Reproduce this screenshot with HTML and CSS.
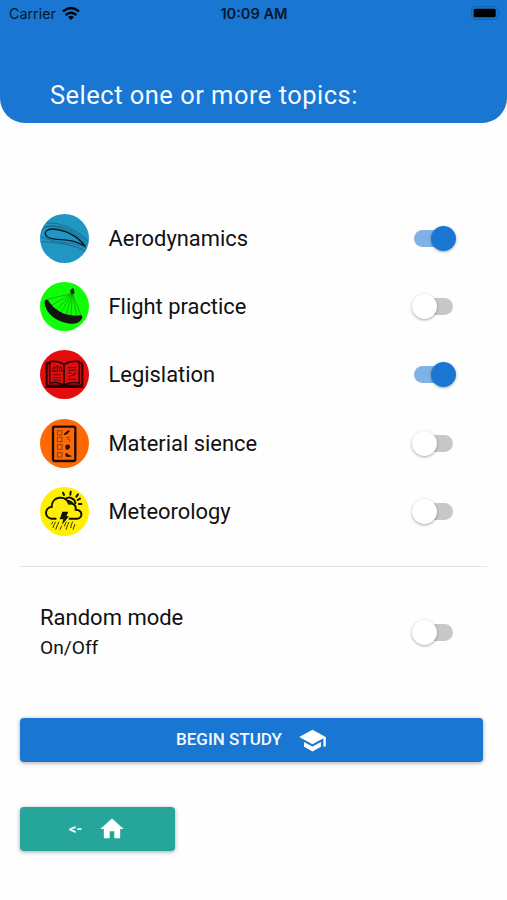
FILE: index.html
```html
<!DOCTYPE html>
<html lang="en">
  <head>
    <meta charset="UTF-8">
    <title>Select topics</title>
    <link rel="stylesheet" href="styles.css">
  </head>
  <body>
    <header class="header">
      <div class="status-bar">
        <div class="carrier">
          <span>Carrier</span>
          <svg class="wifi" viewBox="0 0 54 42">
            <path d="M27 42l-9-9q9-8 18 0z"/>
            <path d="M11 27q16-14 32 0M3 16q24-20 48 0" fill="none" stroke="#000" stroke-width="7"/>
          </svg>
        </div>
        <span class="clock">10:09 AM</span>
        <svg class="battery" viewBox="0 0 90 42">
          <rect x="2" y="2" width="78" height="38" rx="11" fill="none" stroke="#1360ab" stroke-width="3"/>
          <rect x="8" y="8" width="66" height="26" rx="5"/>
          <path d="M84 15q6 6 0 12z" fill="#1360ab"/>
        </svg>
      </div>
      <h1 class="title">Select one or more topics:</h1>
    </header>

    <main class="content">
      <ul class="topics">
        <li class="topic">
          <svg class="topic-icon" viewBox="0 0 147 147">
            <circle cx="73.5" cy="73.5" r="73.5" fill="#2196c3"/>
            <g fill="none" stroke="#15536c" stroke-width="1.8">
              <path d="M20 27q62-4 122 50"/>
              <path d="M12 38q64-15 133 46"/>
              <path d="M5 53q5-18 32-16 53 4 106 54"/>
              <path d="M2 68q38 16 70 18 40 2 68 17"/>
              <path d="M4 83q30 0 58 6 43 5 74 22"/>
            </g>
            <path d="M137 97C110 65 77 47 37 45c-17 0-24 9-20 18 4 10 20 13 45 14 36 2 50 7 75 20z" fill="none" stroke="#061a24" stroke-width="4"/>
          </svg>
          <span class="topic-name">Aerodynamics</span>
          <span class="switch on"></span>
        </li>
        <li class="topic">
          <svg class="topic-icon" viewBox="0 0 147 147">
            <circle cx="73.5" cy="73.5" r="73.5" fill="#10fc08"/>
            <path d="M97 34L23 52M97 34L31 72M97 34L47 86M97 34L61 94M97 34L78 99M97 34L93 102M97 34l13 67M97 34l26 66" stroke="#087908" stroke-width="1.5" fill="none"/>
            <path d="M16 54q5-4 8 1c22 35 56 50 99 45q7 1 2 11-9 16-34 14c-31-2-65-22-74-49q-6-17-1-22z" fill="#151515"/>
            <path d="M92 23l8-6 2 7 2 10-8 3-5-6z" fill="#092108"/>
          </svg>
          <span class="topic-name">Flight practice</span>
          <span class="switch"></span>
        </li>
        <li class="topic">
          <svg class="topic-icon" viewBox="0 0 147 147">
            <circle cx="73.5" cy="73.5" r="73.5" fill="#e40c0d"/>
            <path d="M29 40h-9v71h107V40h-9" fill="none" stroke="#2b0505" stroke-width="6"/>
            <path d="M72 107Q58 94 29 99V35q28-4 43 9 18-13 46-9v64q-31-5-46 8zM72 44v62" fill="none" stroke="#250303" stroke-width="5"/>
            <path d="M20 106h47l6 4 7-4h47" fill="none" stroke="#250303" stroke-width="5"/>
            <g fill="none" stroke="#650808" stroke-width="3">
              <path d="M52 46v22M39 53q13-7 25-1M41 52l-5 12h12zM62 51l-5 12h12z"/>
              <path d="M38 74h25M38 83h25M38 91h25M84 53h24M84 61h24M84 69h10M84 88h24"/>
            </g>
            <path d="M82 83q7-8 15-9l11-7-6 10q-12-1-20 6z" fill="#320404"/>
          </svg>
          <span class="topic-name">Legislation</span>
          <span class="switch on"></span>
        </li>
        <li class="topic">
          <svg class="topic-icon" viewBox="0 0 147 147">
            <circle cx="73.5" cy="73.5" r="73.5" fill="#ff6905"/>
            <rect x="39" y="23" width="67" height="103" rx="5" fill="none" stroke="#1c0c03" stroke-width="7"/>
            <g fill="none" stroke="#92400c" stroke-width="3">
              <rect x="52" y="35" width="14" height="13"/>
              <rect x="52" y="55" width="14" height="13"/>
              <rect x="52" y="77" width="14" height="14"/>
              <rect x="52" y="101" width="14" height="13"/>
              <path d="M78 55h12M81 61h8v7"/>
            </g>
            <g fill="#250f03">
              <path d="M72 49l1-6 13-10 4 2-8 10z"/>
              <path d="M76 80q6-6 13-1 4 6-2 11l-7 3-3-4z"/>
              <path d="M75 106l6-4 4 5 9 3v3l-15 1z"/>
            </g>
          </svg>
          <span class="topic-name">Material sience</span>
          <span class="switch"></span>
        </li>
        <li class="topic">
          <svg class="topic-icon" viewBox="0 0 147 147">
            <circle cx="73.5" cy="73.5" r="73.5" fill="#fff000"/>
            <g fill="none" stroke="#111100" stroke-width="6" stroke-linecap="round">
              <path d="M47 95H35c-24-3-21-34 0-35 0-32 41-38 52-10 14-3 22 6 20 18 23 1 21 25 5 27H89"/>
              <path d="M76 36c13-10 30 0 30 13M86 42q7 1 12 8"/>
              <path d="M69 17l3 7M92 14l-1 9M114 22l-5 7M120 35l-7 4M117 51h7"/>
            </g>
            <path d="M67 74h18l-6 14h8l-21 25 4-16H59z" fill="#111100"/>
            <path d="M39 104l-5 8M47 104l-5 9-3 10M57 104l-6 13-4 11M65 116l-5 12M79 104l-6 14M87 105l-5 11-4 12M98 104l-6 15M105 111l-6 17M94 119l-2 4" fill="none" stroke="#37330a" stroke-width="3"/>
          </svg>
          <span class="topic-name">Meteorology</span>
          <span class="switch"></span>
        </li>
      </ul>

      <section class="random">
        <div>
          <h2 class="random-title">Random mode</h2>
          <p class="random-state">On/Off</p>
        </div>
        <span class="switch"></span>
      </section>

      <button class="btn btn-study">
        <span class="study">BEGIN STUDY</span>
        <svg class="cap" viewBox="0 0 24 24"><path d="M5 13.18v4L12 21l7-3.82v-4L12 17l-7-3.82zM12 3L1 9l11 6 9-4.91V17h2V9L12 3z"/></svg>
      </button>
      <button class="btn btn-home">
        <span class="back">&lt;-</span>
        <svg class="house" viewBox="0 0 24 24"><path d="M10 20v-6h4v6h5v-8h3L12 3 2 12h3v8z"/></svg>
      </button>
    </main>
  </body>
</html>
```
FILE: styles.css
```css
* {
  box-sizing: border-box;
}

body {
  margin: 0;
  height: 900px;
  background-color: #fefefe;
  color: #111;
  font-family: Roboto, sans-serif;
}

h1, h2, p, ul {
  margin: 0;
  padding: 0;
  font-weight: 400;
}

svg {
  display: block;
}

.header {
  height: 123px;
  background-color: #1976d2;
  border-radius: 0 0 25px 25px;
}

.status-bar {
  display: grid;
  grid-template-columns: 1fr auto 1fr;
  align-items: center;
  height: 27px;
  padding: 0 6px 0 9px;
  font-family: Inter, sans-serif;
  font-size: 14.3px;
  color: #06182b;
}

.carrier {
  display: flex;
  align-items: center;
  gap: 6px;
}

.wifi {
  width: 18px;
  height: 14px;
  margin-top: -2px;
}

.clock {
  margin-right: 2px;
  font-size: 14.6px;
  font-weight: 600;
}

.battery {
  justify-self: end;
  width: 30px;
  height: 14px;
  margin-top: -1px;
}

.title {
  padding: 52px 50px 0;
  font-size: 25.5px;
  line-height: 32px;
  letter-spacing: 0.48px;
  color: #f5faff;
}

.content {
  padding: 81px 20px 0;
}

.topics {
  height: 363px;
  padding: 0 20px;
  list-style: none;
  border-bottom: 1px solid #e4e4e4;
}

.topic {
  display: flex;
  align-items: center;
  height: 68.4px;
}

.topic-icon {
  width: 49px;
  height: 49px;
  margin-right: 19.5px;
}

.topic-name {
  font-size: 21.9px;
}

.switch {
  display: flex;
  align-items: center;
  width: 39px;
  height: 17px;
  margin-left: auto;
  margin-right: 14px;
  border-radius: 9px;
  background-color: #c8c8c8;
}

.switch::before {
  content: "";
  flex: none;
  width: 25px;
  height: 25px;
  margin-left: -2.5px;
  border-radius: 50%;
  background-color: #fff;
  box-shadow: 0 1px 3px rgba(0, 0, 0, 0.35);
}

.switch.on {
  background-color: #80b2e7;
}

.switch.on::before {
  margin-left: 17px;
  background-color: #1976d2;
}

.random {
  display: flex;
  align-items: center;
  height: 130px;
  padding: 0 20px;
}

.random-title {
  padding-top: 2px;
  font-size: 22px;
  line-height: 30px;
}

.random-state {
  font-size: 19.2px;
  line-height: 30px;
}

.btn {
  display: flex;
  align-items: center;
  justify-content: center;
  height: 44px;
  padding: 0;
  border: none;
  border-radius: 4px;
  color: #f5faff;
  fill: #fff;
  font-family: inherit;
  font-size: 17px;
  font-weight: 500;
  box-shadow: 0 1px 4px rgba(0, 0, 0, 0.35);
}

.btn-study {
  width: 463px;
  margin-top: 21px;
  background-color: #1976d2;
}

.study {
  padding-bottom: 2px;
}

.cap {
  width: 29px;
  height: 29px;
  margin-left: 16px;
}

.btn-home {
  width: 155px;
  margin-top: 45px;
  background-color: #26a69a;
}

.back {
  font-size: 15px;
  font-weight: 700;
}

.house {
  width: 28px;
  height: 28px;
  margin-left: 16px;
}
```
